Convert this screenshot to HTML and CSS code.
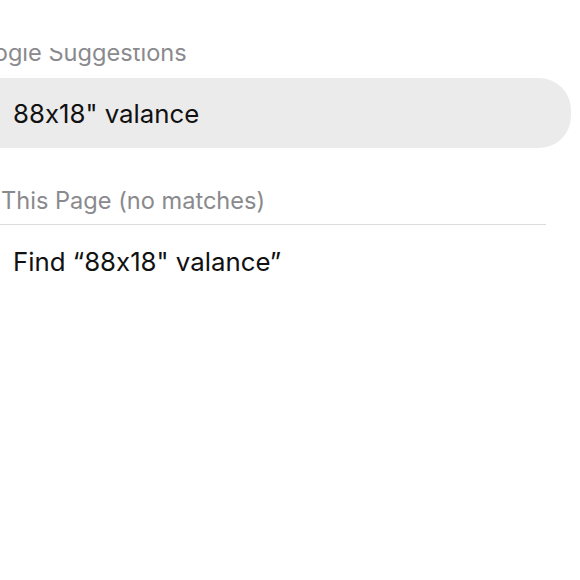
FILE: index.html
```html
<!DOCTYPE html>
<html>
<head>
<meta charset="utf-8">
<link rel="stylesheet" href="styles.css">
</head>
<body>
<div class="page">
  <div class="top-fade"></div>
  <div class="header header-google">Google Suggestions</div>
  <div class="suggestion">88x18" valance</div>
  <div class="header header-page">This Page (no matches)</div>
  <div class="divider"></div>
  <div class="find">Find “88x18" valance”</div>
</div>
</body>
</html>
```
FILE: styles.css
```css
html, body {
  margin: 0;
  padding: 0;
  background: #ffffff;
  overflow: hidden;
}
.page {
  position: relative;
  width: 580px;
  height: 580px;
  overflow: hidden;
  font-family: Inter, "Noto Sans", sans-serif;
  font-feature-settings: "calt" 0;
  display: flex;
  flex-direction: column;
}
.top-fade {
  position: absolute;
  left: 0;
  top: 0;
  width: 580px;
  height: 48px;
  background: #ffffff;
  z-index: 2;
}
.header {
  font-size: 23.6px;
  color: #8a8a8e;
  line-height: 28px;
  white-space: nowrap;
}
.header-google {
  margin-top: 39px;
  margin-left: -38px;
}
.suggestion {
  margin-top: 11px;
  margin-left: -40px;
  width: 611px;
  height: 70px;
  box-sizing: border-box;
  border-radius: 32px;
  background: #ebebeb;
  color: #111111;
  font-size: 25.8px;
  display: flex;
  align-items: center;
  padding-left: 53px;
}
.header-page {
  margin-top: 39px;
  margin-left: 1px;
}
.divider {
  margin-top: 9px;
  width: 546px;
  height: 1px;
  background: #dcdcdc;
}
.find {
  margin-top: 22px;
  margin-left: 13px;
  font-size: 25.8px;
  color: #111111;
  line-height: 30px;
}
```
